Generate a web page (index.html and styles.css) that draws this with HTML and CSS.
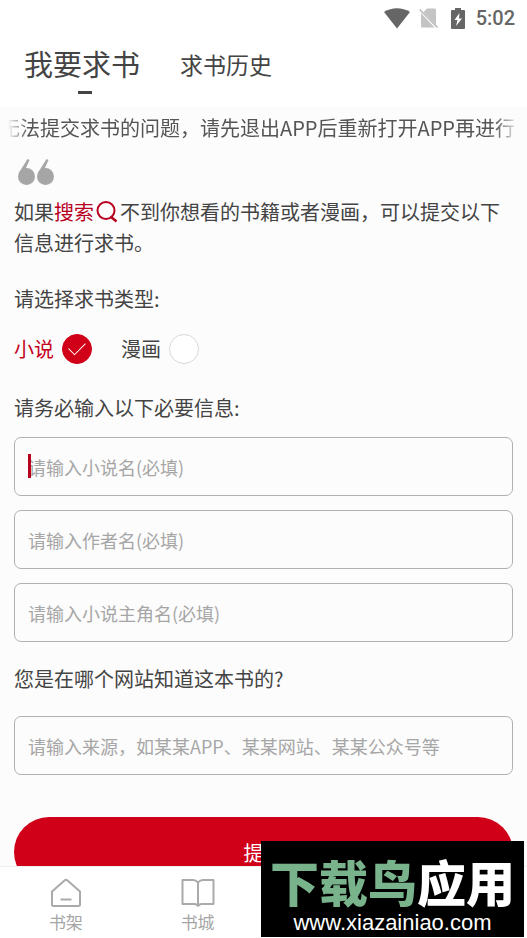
FILE: index.html
```html
<!DOCTYPE html>
<html lang="zh-CN">
<head>
<meta charset="utf-8">
<meta name="viewport" content="width=device-width, initial-scale=1">
<title>我要求书</title>
<link rel="stylesheet" href="styles.css">
</head>
<body>
<header class="top">
  <div class="status">
    <svg width="26" height="21" viewBox="0 0 26 21"><path d="M0 4C8-1 18-1 26 4L13 20.500Z" fill="#666"/></svg>
    <svg class="sim" width="20" height="20" viewBox="0 0 20 20"><path d="M2 5V18.500Q2 19.500 3 19.500H15.500L2 5ZM4.500 4L8 .5H15.500Q17 .5 17 2V17Z" fill="#c4c4c4"/><path d="M.7 1.500L18.500 19.500" stroke="#b8b8b8" stroke-width="1.500"/></svg>
    <svg width="14" height="21" viewBox="0 0 14 21"><path d="M4 0h6v2h3q1 0 1 1v17q0 1-1 1h-12Q0 21 0 20v-17Q0 2 1 2H4Z" fill="#666"/><path d="M8.500 5L3.500 12h3L5 18l6-7.500H8Z" fill="#fff"/></svg>
    <span class="time">5:02</span>
  </div>
  <nav class="tabs">
    <a class="tab tab-active" href="#request">我要求书</a>
    <a class="tab" href="#history">求书历史</a>
  </nav>
</header>

<main class="content" id="request">
  <div class="marquee"><span class="marquee-text">无法提交求书的问题，请先退出APP后重新打开APP再进行</span></div>
  <svg class="quote" width="36" height="27" viewBox="0 0 36 27" fill="#a6a6a6"><circle cx="8.500" cy="17.500" r="8.500"/><circle cx="27.500" cy="17.500" r="8.500"/><path d="M.8 14L9.500 0L11.500 1L7.500 10ZM19.800 14L28.500 0L30.500 1L26.500 10Z"/></svg>
  <p class="intro">如果<a class="search" href="#search">搜索<svg class="search-icon" width="22" height="22" viewBox="0 0 22 22" fill="none" stroke="#b8001f"><circle cx="10" cy="9.500" r="8.500" stroke-width="2"/><path d="M14.500 15.500L20.500 20.500" stroke-width="2.500"/></svg></a>不到你想看的书籍或者漫画，可以提交以下信息进行求书。</p>

  <form class="form">
    <h2 class="heading" id="kind">请选择求书类型:</h2>
    <div class="choices" role="radiogroup" aria-labelledby="kind">
      <label class="choice">小说<input class="radio" type="radio" name="kind" checked></label>
      <label class="choice">漫画<input class="radio" type="radio" name="kind"></label>
    </div>

    <h2 class="heading">请务必输入以下必要信息:</h2>
    <div class="fields">
      <div class="focused"><input class="field" type="text" aria-label="小说名" placeholder="请输入小说名(必填)"><span class="caret"></span></div>
      <input class="field" type="text" aria-label="作者名" placeholder="请输入作者名(必填)">
      <input class="field" type="text" aria-label="小说主角名" placeholder="请输入小说主角名(必填)">
    </div>

    <h2 class="heading heading-source"><label for="source">您是在哪个网站知道这本书的?</label></h2>
    <input class="field" id="source" type="text" placeholder="请输入来源，如某某APP、某某网站、某某公众号等">
    <button class="submit" type="button">提交</button>
  </form>
</main>

<footer class="bottom">
  <nav class="nav">
    <a class="nav-item" href="#shelf">
      <svg width="32" height="30" viewBox="0 0 32 30" fill="none" stroke="#aaa" stroke-width="2" stroke-linejoin="round"><path d="M2 13.500L14.500 2.500Q16 1.200 17.500 2.500L30 13.500V26.500Q30 28 28.500 28H3.500Q2 28 2 26.500Z"/><path d="M10.500 21.500H21.500"/></svg>
      书架
    </a>
    <a class="nav-item" href="#store">
      <svg width="34" height="30" viewBox="0 0 34 30" fill="none" stroke="#aaa" stroke-width="2" stroke-linejoin="round"><path d="M17 4.500Q15 2 12 2H1.500V26H13.500Q15.500 26 17 28Q18.500 26 20.500 26H32.500V2H22Q19 2 17 4.500V28"/></svg>
      书城
    </a>
  </nav>
  <div class="watermark">
    <div class="brand">下载鸟<span class="brand-white">应用</span></div>
    <div class="site">www.xiazainiao.com</div>
  </div>
</footer>
</body>
</html>
```
FILE: styles.css
```css
* {
  box-sizing: border-box;
}

body {
  display: flex;
  flex-direction: column;
  height: 100vh;
  margin: 0;
  background: #fcfcfc;
  color: #444;
  font-family: Roboto, "Noto Sans CJK SC", sans-serif;
  font-size: 20px;
  line-height: 31px;
}

a {
  color: inherit;
  text-decoration: none;
}

svg {
  flex: none;
}

.top {
  flex: none;
  background: #fff;
}

.status {
  display: flex;
  align-items: center;
  justify-content: flex-end;
  height: 36px;
  padding-right: 12px;
  color: #666;
}

.sim {
  margin: 0 12px 0 9px;
}

.time {
  margin-left: 11px;
  font-weight: 500;
}

.tabs {
  display: flex;
  align-items: center;
  gap: 40px;
  height: 71px;
  padding: 0 24px 10px;
}

.tab {
  position: relative;
  font-size: 23px;
}

.tab-active {
  font-size: 29px;
}

.tab-active::after {
  content: "";
  position: absolute;
  bottom: -12px;
  left: calc(50% - 4px);
  width: 14px;
  height: 3px;
  background: #444;
}

.content {
  flex: 1;
  min-height: 0;
  overflow: hidden;
  padding: 5px 14px 0;
  font-family: "Noto Sans CJK SC", sans-serif;
}

.marquee {
  display: flex;
  justify-content: flex-end;
  overflow: hidden;
  margin: 0 -6px;
  padding-right: 4px;
  color: #555;
  white-space: nowrap;
  -webkit-mask-image: linear-gradient(90deg, transparent, #000 20px, #000 calc(100% - 24px), transparent);
  mask-image: linear-gradient(90deg, transparent, #000 20px, #000 calc(100% - 24px), transparent);
}

.marquee-text {
  flex: none;
}

.quote {
  display: block;
  margin: 16px 0 10px 4px;
}

.intro {
  margin: 0;
}

.search {
  color: #b8001f;
}

.search-icon {
  margin: 0 2px;
  vertical-align: -3px;
}

.heading {
  margin: 25px 0 19px;
  font-size: 20px;
  font-weight: 400;
}

.choices {
  display: flex;
  gap: 29px;
  margin-bottom: 28px;
}

.choice {
  display: flex;
  align-items: center;
  gap: 8px;
}

.choice:has(:checked) {
  color: #c5001d;
}

.radio {
  display: grid;
  place-items: center;
  appearance: none;
  width: 30px;
  height: 30px;
  margin: 0;
  border: 1px solid #d8d8d8;
  border-radius: 50%;
  background: #fff;
}

.radio:checked {
  border-color: #d00019;
  background: #d00019;
}

.radio:checked::after {
  content: "";
  width: 15px;
  height: 8px;
  margin-bottom: 4px;
  border: solid #fff;
  border-width: 0 0 1px 1px;
  transform: rotate(-45deg);
}

.choices + .heading {
  margin-bottom: 14px;
}

.fields {
  display: grid;
  gap: 14px;
}

.focused {
  position: relative;
}

.field {
  display: block;
  width: 100%;
  height: 59px;
  padding: 0 13px;
  border: 1px solid #b0b0b0;
  border-radius: 7px;
  background: transparent;
  color: #444;
  font: inherit;
  font-size: 18px;
}

.field::placeholder {
  color: #a6a6a6;
}

.caret {
  position: absolute;
  top: 17px;
  left: 14px;
  width: 3px;
  height: 24px;
  background: #b8001f;
}

.heading-source {
  margin: 21px 0 22px;
}

.submit {
  display: block;
  width: 100%;
  height: 70px;
  margin-top: 42px;
  border: 0;
  border-radius: 35px;
  background: #d00019;
  color: #fff;
  font: inherit;
}

.bottom {
  position: relative;
  flex: none;
  background: #fff;
  border-top: 1px solid #f0f0f0;
}

.nav {
  display: grid;
  grid-template-columns: repeat(4, 1fr);
  height: 71px;
}

.nav-item {
  display: flex;
  flex-direction: column;
  align-items: center;
  padding-top: 11px;
  color: #a6a6a6;
  font-size: 17px;
  line-height: 30px;
}

.watermark {
  position: absolute;
  right: 3px;
  bottom: 1px;
  width: 263px;
  height: 96px;
  padding-top: 14px;
  background: #000;
  color: #fff;
  text-align: center;
}

.brand {
  color: #79b38b;
  font-family: "Noto Sans CJK SC", sans-serif;
  font-size: 49px;
  font-weight: 900;
  line-height: 52px;
}

.brand-white {
  color: #fff;
}

.site {
  font-family: "Liberation Sans", sans-serif;
  font-size: 22px;
  line-height: 32px;
}
```
